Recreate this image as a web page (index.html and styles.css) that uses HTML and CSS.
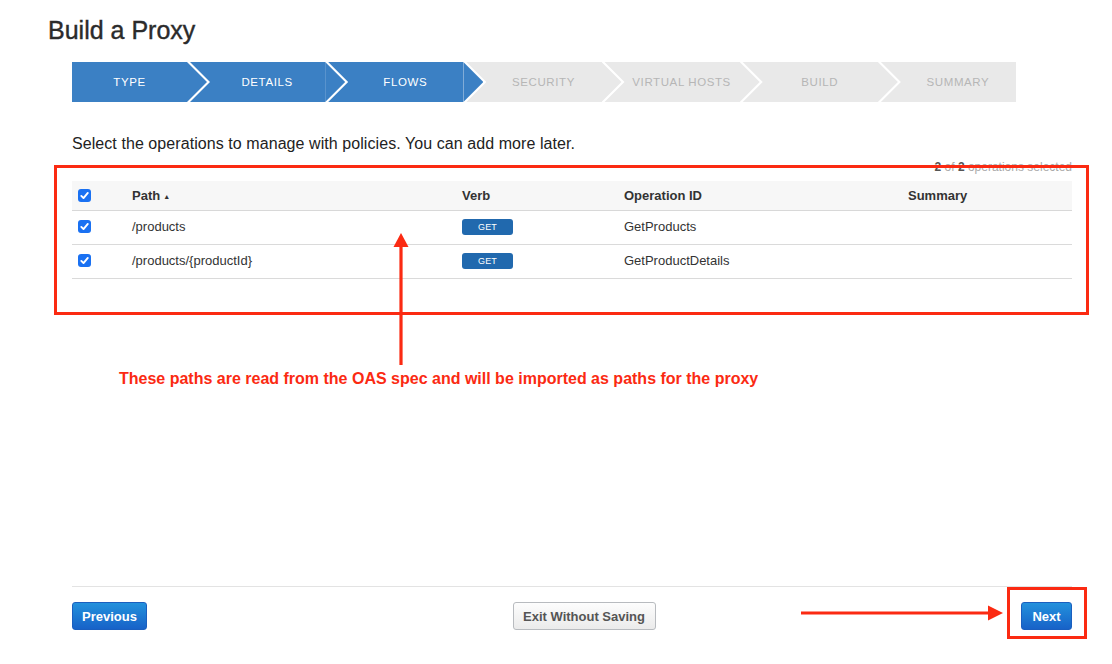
FILE: index.html
```html
<!DOCTYPE html>
<html lang="en">
<head>
<meta charset="utf-8">
<title>Build a Proxy</title>
<link rel="stylesheet" href="styles.css">
</head>
<body>
<div class="page">
  <h1 class="title">Build a Proxy</h1>

  <div class="steps">
    <div class="step done">Type</div>
    <div class="step done">Details</div>
    <div class="step done">Flows</div>
    <div class="step todo">Security</div>
    <div class="step todo">Virtual Hosts</div>
    <div class="step todo">Build</div>
    <div class="step todo">Summary</div>
  </div>

  <div class="content">
    <p class="intro">Select the operations to manage with policies. You can add more later.</p>
    <div class="selcount"><b>2</b> of <b>2</b> operations selected</div>

    <table class="ops">
      <colgroup>
        <col class="c-check"><col class="c-path"><col class="c-verb"><col class="c-opid"><col class="c-sum">
      </colgroup>
      <thead>
        <tr>
          <th><span class="cb"><svg viewBox="0 0 13 13" width="13" height="13"><rect width="13" height="13" rx="3" fill="#1a71f2"/><path d="M3.3 6.9 L5.5 9.1 L9.8 3.9" fill="none" stroke="#fff" stroke-width="1.9" stroke-linecap="round" stroke-linejoin="round"/></svg></span></th>
          <th>Path<span class="sort">▲</span></th>
          <th>Verb</th>
          <th>Operation ID</th>
          <th>Summary</th>
        </tr>
      </thead>
      <tbody>
        <tr>
          <td><span class="cb"><svg viewBox="0 0 13 13" width="13" height="13"><rect width="13" height="13" rx="3" fill="#1a71f2"/><path d="M3.3 6.9 L5.5 9.1 L9.8 3.9" fill="none" stroke="#fff" stroke-width="1.9" stroke-linecap="round" stroke-linejoin="round"/></svg></span></td>
          <td>/products</td>
          <td><span class="verb">GET</span></td>
          <td>GetProducts</td>
          <td></td>
        </tr>
        <tr>
          <td><span class="cb"><svg viewBox="0 0 13 13" width="13" height="13"><rect width="13" height="13" rx="3" fill="#1a71f2"/><path d="M3.3 6.9 L5.5 9.1 L9.8 3.9" fill="none" stroke="#fff" stroke-width="1.9" stroke-linecap="round" stroke-linejoin="round"/></svg></span></td>
          <td>/products/{productId}</td>
          <td><span class="verb">GET</span></td>
          <td>GetProductDetails</td>
          <td></td>
        </tr>
      </tbody>
    </table>

    <div class="footer">
      <button class="btn btn-primary btn-prev">Previous</button>
      <button class="btn btn-default btn-exit">Exit Without Saving</button>
      <button class="btn btn-primary btn-next">Next</button>
    </div>
  </div>

  <div class="annotations">
    <div class="mark mark-table"></div>
    <div class="mark mark-next"></div>
    <svg class="arrows" width="1112" height="664" viewBox="0 0 1112 664">
      <line x1="401" y1="245" x2="401" y2="365" stroke="#fb2a12" stroke-width="3.2"/>
      <polygon points="401,233 393.5,247 408.5,247" fill="#fb2a12"/>
      <line x1="801" y1="613" x2="990" y2="613" stroke="#fb2a12" stroke-width="3.2"/>
      <polygon points="1003,613 988,605.5 988,620.5" fill="#fb2a12"/>
    </svg>
    <p class="note">These paths are read from the OAS spec and will be imported as paths for the proxy</p>
  </div>
</div>
</body>
</html>
```

FILE: styles.css
```css
* { box-sizing: border-box; }

html, body {
  margin: 0;
  padding: 0;
  background: #ffffff;
}

body {
  font-family: "Liberation Sans", Arial, Helvetica, sans-serif;
  color: #333333;
}

.page {
  position: relative;
  width: 1112px;
  height: 664px;
  display: flex;
  flex-direction: column;
  overflow: hidden;
}

.title {
  margin: 16px 0 0 48px;
  font-size: 25px;
  line-height: 29px;
  font-weight: normal;
  color: #2b2b2b;
  -webkit-text-stroke: 0.4px #2b2b2b;
}

/* ---------- stepper ---------- */
.steps {
  display: flex;
  width: 944px;
  height: 40px;
  margin: 17px 0 0 72px;
}

.step {
  position: relative;
  display: flex;
  align-items: center;
  justify-content: center;
  flex: 1 1 0;
  padding-left: 22px;
  font-size: 11.5px;
  letter-spacing: 0.6px;
  text-transform: uppercase;
}

.step:first-child {
  flex: 0 0 115px;
  padding-left: 0;
}

.step.done {
  background: #3b80c4;
  color: #ffffff;
}

.step.todo {
  background: #e9e9e9;
  color: #b6b6b6;
}

.step:not(:last-child)::before,
.step:not(:last-child)::after {
  content: "";
  position: absolute;
  top: 0;
  left: 100%;
  height: 40px;
  z-index: 1;
}

.step:not(:last-child)::before {
  width: 23px;
  background: #ffffff;
  clip-path: polygon(0 0, 3px 0, 23px 50%, 3px 100%, 0 100%);
}

.step:not(:last-child)::after {
  width: 20px;
  background: inherit;
  clip-path: polygon(0 0, 100% 50%, 0 100%);
}

/* ---------- content ---------- */
.content {
  flex: 1;
  display: flex;
  flex-direction: column;
  width: 1000px;
  margin-left: 72px;
}

.intro {
  margin: 33px 0 0 0;
  font-size: 16px;
  line-height: 18px;
  letter-spacing: 0.07px;
  color: #222222;
}

.selcount {
  margin-top: 7px;
  text-align: right;
  font-size: 12px;
  line-height: 14px;
  color: #a9a9a9;
}

.selcount b {
  color: #555555;
}

.ops {
  margin-top: 7px;
  width: 1000px;
  border-collapse: collapse;
  table-layout: fixed;
  font-size: 13px;
}

.c-check { width: 54px; }
.c-path { width: 330px; }
.c-verb { width: 162px; }
.c-opid { width: 284px; }
.c-sum { width: 170px; }

.ops th,
.ops td {
  padding: 0 6px;
  text-align: left;
  vertical-align: middle;
}

.ops thead tr {
  height: 29px;
  background: #f7f7f7;
  border-bottom: 1px solid #d8d8d8;
}

.ops th {
  font-weight: bold;
  color: #333333;
}

.ops tbody tr {
  height: 34px;
  border-bottom: 1px solid #dadada;
}

.ops td {
  color: #333333;
  padding-bottom: 2px;
}

.cb {
  display: block;
  width: 13px;
  height: 13px;
}

.cb svg { display: block; }

.sort {
  font-size: 7px;
  margin-left: 3px;
  vertical-align: 1px;
  color: #333333;
}

.verb {
  display: block;
  width: 51px;
  height: 16px;
  margin-top: 2px;
  line-height: 16px;
  border-radius: 3px;
  background: #2169ae;
  color: #ffffff;
  font-size: 9px;
  text-align: center;
  letter-spacing: 0.2px;
}

/* ---------- footer ---------- */
.footer {
  margin-top: auto;
  margin-bottom: 34px;
  border-top: 1px solid #e3e3e3;
  padding-top: 15px;
  display: flex;
  justify-content: space-between;
  align-items: center;
}

.btn {
  height: 28px;
  padding: 0;
  border-radius: 3px;
  font-family: "Liberation Sans", Arial, Helvetica, sans-serif;
  font-size: 13px;
  font-weight: bold;
  cursor: pointer;
}

.btn-primary {
  background: linear-gradient(#2391dc, #1762c8);
  border: 1px solid #1a5fbf;
  color: #ffffff;
}

.btn-default {
  background: linear-gradient(#fdfdfd, #ebebeb);
  border: 1px solid #b8bbbf;
  color: #555555;
}

.btn-prev { width: 75px; }
.btn-exit { width: 143px; }
.btn-next { width: 51px; }

/* ---------- annotation overlay ---------- */
.annotations {
  position: absolute;
  inset: 0;
  pointer-events: none;
}

.mark {
  position: absolute;
  border: 3px solid #fb2a12;
}

.mark-table {
  left: 54px;
  top: 165px;
  width: 1035px;
  height: 150px;
}

.mark-next {
  left: 1007px;
  top: 587px;
  width: 80px;
  height: 52px;
}

.arrows {
  position: absolute;
  left: 0;
  top: 0;
}

.note {
  position: absolute;
  left: 119px;
  top: 370px;
  margin: 0;
  font-size: 16px;
  line-height: 18px;
  font-weight: bold;
  color: #fb2a12;
  white-space: nowrap;
}
```
